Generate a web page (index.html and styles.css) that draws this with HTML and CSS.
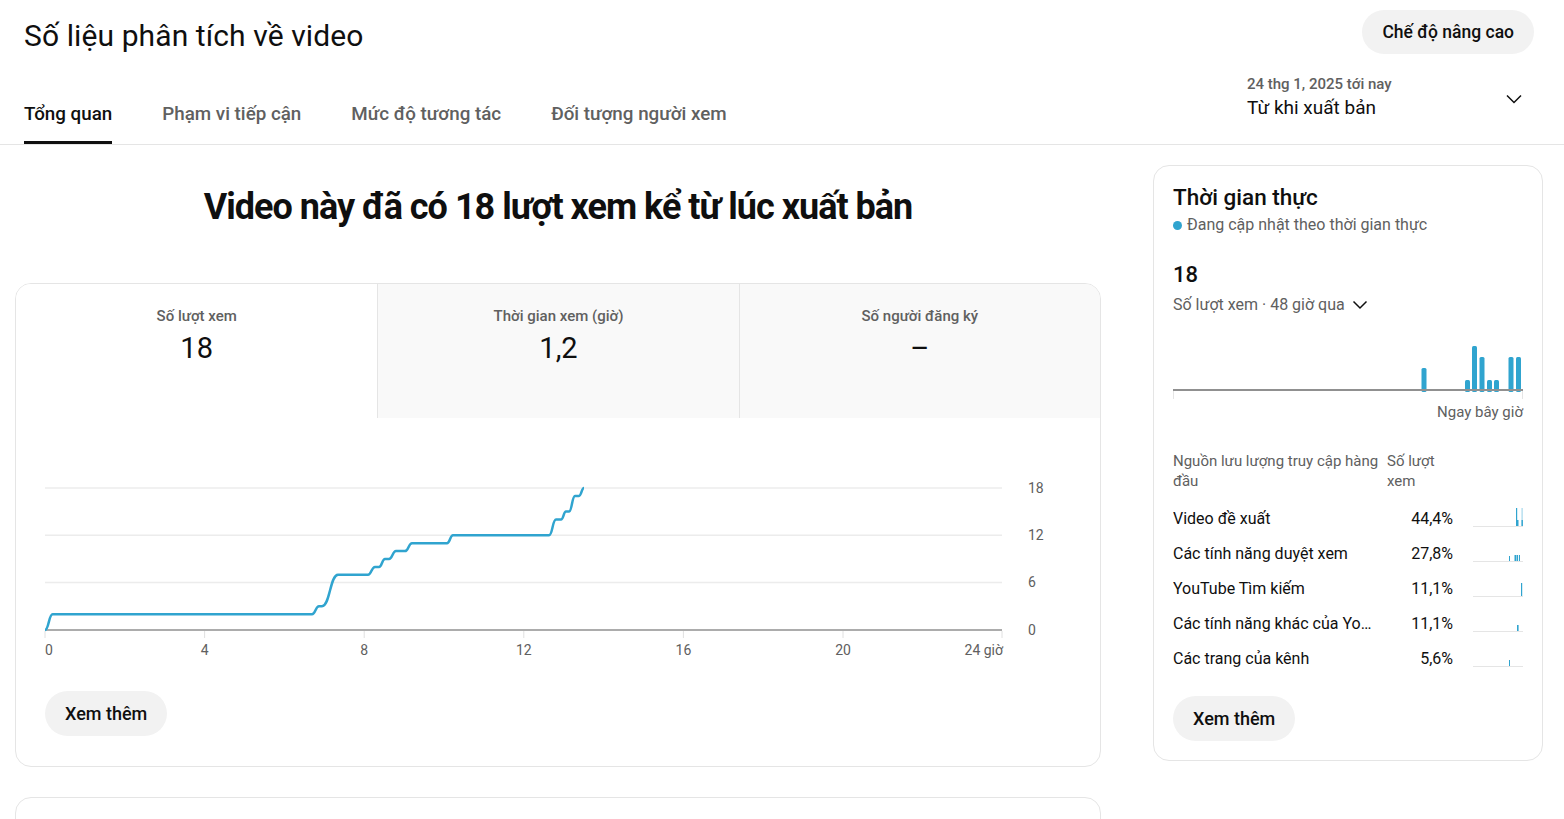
FILE: index.html
```html
<!DOCTYPE html>
<html lang="vi">
  <head>
    <meta charset="UTF-8" />
    <meta name="viewport" content="width=device-width, initial-scale=1.0" />
    <title>Số liệu phân tích về video</title>
    <link rel="stylesheet" href="styles.css">
  </head>
  <body>
    <header class="page-header">
      <div class="header-top">
        <h1 class="page-title">Số liệu phân tích về video</h1>
        <button class="pill-btn advanced-btn">Chế độ nâng cao</button>
      </div>
      <div class="header-bottom">
        <nav class="tabs">
          <a class="tab active">Tổng quan</a>
          <a class="tab">Phạm vi tiếp cận</a>
          <a class="tab">Mức độ tương tác</a>
          <a class="tab">Đối tượng người xem</a>
        </nav>
        <div class="date-picker">
          <div class="date-text">
            <div class="date-range">24 thg 1, 2025 tới nay</div>
            <div class="date-label">Từ khi xuất bản</div>
          </div>
          <svg class="chevron" width="16" height="10" viewBox="0 0 16 10">
            <path d="M1 1.5 L8 8.5 L15 1.5" fill="none" stroke="#0f0f0f" stroke-width="1.5" />
          </svg>
        </div>
      </div>
    </header>

    <main class="layout">
      <section class="left-col">
        <h2 class="headline">Video này đã có 18 lượt xem kể từ lúc xuất bản</h2>

        <div class="card overview-card">
          <div class="metrics">
            <div class="metric selected">
              <div class="metric-label">Số lượt xem</div>
              <div class="metric-value">18</div>
            </div>
            <div class="metric">
              <div class="metric-label">Thời gian xem (giờ)</div>
              <div class="metric-value">1,2</div>
            </div>
            <div class="metric">
              <div class="metric-label">Số người đăng ký</div>
              <div class="metric-value">–</div>
            </div>
          </div>

          <svg class="line-chart" width="1084" height="252" viewBox="16 418 1084 252">
            <g stroke="#ececec" stroke-width="1.5">
              <line x1="45" y1="488" x2="1002" y2="488" />
              <line x1="45" y1="535.3" x2="1002" y2="535.3" />
              <line x1="45" y1="582.6" x2="1002" y2="582.6" />
            </g>
            <g stroke="#e0e0e0" stroke-width="1">
              <line x1="45" y1="631" x2="45" y2="638" />
              <line x1="204.6" y1="631" x2="204.6" y2="638" />
              <line x1="364.2" y1="631" x2="364.2" y2="638" />
              <line x1="523.8" y1="631" x2="523.8" y2="638" />
              <line x1="683.4" y1="631" x2="683.4" y2="638" />
              <line x1="843" y1="631" x2="843" y2="638" />
              <line x1="1002" y1="631" x2="1002" y2="638" />
            </g>
            <line x1="45" y1="630" x2="1002" y2="630" stroke="#909090" stroke-width="1.5" />
            <path class="views-line" d="M45 630 C48.8 630, 48.8 614.2, 52.6 614.2 L312 614.2 C315.5 614.2, 315.5 606.3, 319 606.3 L322 606.3 C330 606.3, 330 574.8, 338 574.8 L368 574.8 C371.5 574.8, 371.5 566.9, 375 566.9 L379 566.9 C382 566.9, 382 559, 385 559 L389 559 C392.5 559, 392.5 551.1, 396 551.1 L405 551.1 C408.5 551.1, 408.5 543.2, 412 543.2 L447 543.2 C450 543.2, 450 535.3, 453 535.3 L549 535.3 C552.5 535.3, 552.5 519.5, 556 519.5 L561 519.5 C563.5 519.5, 563.5 511.6, 566 511.6 L569 511.6 C572 511.6, 572 495.9, 575 495.9 L579 495.9 C581.5 495.9, 581.5 488, 584 488" />
            <g class="axis-text">
              <text x="45" y="655">0</text>
              <text x="204.6" y="655" text-anchor="middle">4</text>
              <text x="364.2" y="655" text-anchor="middle">8</text>
              <text x="523.8" y="655" text-anchor="middle">12</text>
              <text x="683.4" y="655" text-anchor="middle">16</text>
              <text x="843" y="655" text-anchor="middle">20</text>
              <text x="1003" y="655" text-anchor="end">24 giờ</text>
              <text x="1028" y="493">18</text>
              <text x="1028" y="540">12</text>
              <text x="1028" y="587">6</text>
              <text x="1028" y="635">0</text>
            </g>
          </svg>

          <button class="pill-btn more-btn">Xem thêm</button>
        </div>

        <div class="card next-card"></div>
      </section>

      <aside class="card realtime">
        <h3 class="realtime-title">Thời gian thực</h3>
        <div class="live-note"><span class="live-dot"></span>Đang cập nhật theo thời gian thực</div>
        <div class="realtime-count">18</div>
        <div class="realtime-metric">
          Số lượt xem · 48 giờ qua
          <svg width="16" height="10" viewBox="0 0 16 10">
            <path d="M1.5 1.5 L8 8 L14.5 1.5" fill="none" stroke="#0f0f0f" stroke-width="1.5" />
          </svg>
        </div>
        <svg class="bar-chart" width="350" height="80" viewBox="1173 320 350 80">
          <g fill="#30a4cf">
            <rect x="1421.5" y="368" width="5" height="24" rx="1.5" />
            <rect x="1465" y="380" width="5" height="12" rx="1.5" />
            <rect x="1472" y="346" width="5" height="46" rx="1.5" />
            <rect x="1479.5" y="357" width="5" height="35" rx="1.5" />
            <rect x="1487" y="380" width="5" height="12" rx="1.5" />
            <rect x="1494" y="380" width="5" height="12" rx="1.5" />
            <rect x="1508.5" y="357" width="5" height="35" rx="1.5" />
            <rect x="1516" y="357" width="5" height="35" rx="1.5" />
          </g>
          <line x1="1173" y1="390" x2="1523" y2="390" stroke="#909090" stroke-width="2" />
          <g stroke="#e5e5e5" stroke-width="1">
            <line x1="1173.5" y1="391" x2="1173.5" y2="399" />
            <line x1="1522.5" y1="391" x2="1522.5" y2="399" />
          </g>
        </svg>
        <div class="now-label">Ngay bây giờ</div>

        <div class="sources">
          <div class="sources-head">Nguồn lưu lượng truy cập hàng đầu</div>
          <div class="sources-head">Số lượt xem</div>
          <div></div>

          <div class="source-name">Video đề xuất</div>
          <div class="source-pct">44,4%</div>
          <svg class="spark" width="50" height="22" viewBox="0 0 50 22">
            <line x1="0" y1="18.5" x2="50" y2="18.5" stroke="#e5e5e5" />
            <rect x="43" y="0" width="1.2" height="18" fill="#30a4cf" />
            <rect x="43.5" y="12" width="2" height="6" fill="#30a4cf" />
            <rect x="48.5" y="0" width="1.2" height="18" fill="#a6d8ec" />
            <rect x="48.5" y="12" width="1.4" height="6" fill="#30a4cf" />
          </svg>

          <div class="source-name">Các tính năng duyệt xem</div>
          <div class="source-pct">27,8%</div>
          <svg class="spark" width="50" height="22" viewBox="0 0 50 22">
            <line x1="0" y1="18.5" x2="50" y2="18.5" stroke="#e5e5e5" />
            <rect x="36" y="13" width="1" height="5" fill="#30a4cf" />
            <rect x="41.5" y="12" width="1.6" height="6" fill="#30a4cf" />
            <rect x="43.5" y="12" width="1.6" height="6" fill="#30a4cf" />
            <rect x="46" y="12" width="1" height="6" fill="#30a4cf" />
          </svg>

          <div class="source-name">YouTube Tìm kiếm</div>
          <div class="source-pct">11,1%</div>
          <svg class="spark" width="50" height="22" viewBox="0 0 50 22">
            <line x1="0" y1="18.5" x2="50" y2="18.5" stroke="#e5e5e5" />
            <rect x="48" y="5" width="1.2" height="13" fill="#30a4cf" />
          </svg>

          <div class="source-name">Các tính năng khác của YouTube</div>
          <div class="source-pct">11,1%</div>
          <svg class="spark" width="50" height="22" viewBox="0 0 50 22">
            <line x1="0" y1="18.5" x2="50" y2="18.5" stroke="#e5e5e5" />
            <rect x="44" y="12" width="1.6" height="6" fill="#30a4cf" />
          </svg>

          <div class="source-name">Các trang của kênh</div>
          <div class="source-pct">5,6%</div>
          <svg class="spark" width="50" height="22" viewBox="0 0 50 22">
            <line x1="0" y1="18.5" x2="50" y2="18.5" stroke="#e5e5e5" />
            <rect x="36" y="12" width="1" height="6" fill="#30a4cf" />
          </svg>
        </div>

        <button class="pill-btn more-btn realtime-more">Xem thêm</button>
      </aside>
    </main>
  </body>
</html>
```

FILE: styles.css
```css
:root {
  --text: #0f0f0f;
  --muted: #606060;
  --border: #e5e5e5;
  --pill: #f2f2f2;
  --blue: #30a4cf;
}

body {
  margin: 0;
  background: #fff;
  color: var(--text);
  font-family: Roboto, "Liberation Sans", sans-serif;
  overflow: hidden;
}

/* header */
.page-header {
  border-bottom: 1px solid var(--border);
  padding: 0 30px 0 24px;
}

.header-top {
  display: flex;
  justify-content: space-between;
  align-items: flex-start;
  padding-top: 10px;
}

.page-title {
  margin: 6px 0 0;
  font-size: 30px;
  font-weight: 400;
  line-height: 40px;
  letter-spacing: 0.1px;
}

.pill-btn {
  border: none;
  background: var(--pill);
  color: var(--text);
  font-family: Roboto, "Liberation Sans", sans-serif;
  font-weight: 500;
  border-radius: 23px;
  cursor: pointer;
}

.advanced-btn {
  height: 44px;
  padding: 0 20px;
  font-size: 17.5px;
}

.header-bottom {
  display: flex;
  justify-content: space-between;
  height: 88px;
}

.tabs {
  display: flex;
  align-items: flex-end;
  gap: 50px;
}

.tab {
  font-size: 18.8px;
  font-weight: 500;
  line-height: 24px;
  color: var(--muted);
  padding-bottom: 15px;
  border-bottom: 3px solid transparent;
}

.tab.active {
  color: var(--text);
  border-bottom-color: var(--text);
}

.date-picker {
  width: 275px;
  padding-right: 12px;
  margin-top: 18px;
  display: flex;
  justify-content: space-between;
  align-items: center;
  align-self: flex-start;
}

.date-range {
  font-size: 15px;
  font-weight: 500;
  line-height: 20px;
  color: var(--muted);
}

.date-label {
  font-size: 19px;
  line-height: 24px;
  margin-top: 2px;
}

.chevron {
  margin-top: 4px;
}

/* main layout */
.layout {
  display: grid;
  grid-template-columns: 1086px 390px;
  column-gap: 52px;
  padding: 21px 21px 0 15px;
  align-items: start;
}

.headline {
  margin: 17px 0 52px;
  text-align: center;
  font-size: 36px;
  line-height: 48px;
  font-weight: 700;
  letter-spacing: -1px;
}

.card {
  border: 1px solid var(--border);
  border-radius: 16px;
  background: #fff;
}

.overview-card {
  overflow: hidden;
  padding-bottom: 30px;
}

.metrics {
  display: grid;
  grid-template-columns: repeat(3, 1fr);
  height: 134px;
}

.metric {
  background: #f9f9f9;
  border-left: 1px solid var(--border);
  text-align: center;
  padding-top: 22px;
}

.metric.selected {
  background: #fff;
  border-left: none;
}

.metric-label {
  font-size: 15px;
  font-weight: 500;
  line-height: 20px;
  color: var(--muted);
}

.metric-value {
  margin-top: 4px;
  font-size: 29px;
  line-height: 36px;
}

.line-chart {
  display: block;
}

.views-line {
  fill: none;
  stroke: var(--blue);
  stroke-width: 2.5;
  stroke-linejoin: round;
}

.axis-text {
  font-family: Roboto, sans-serif;
  font-size: 14px;
  fill: var(--muted);
}

.more-btn {
  display: block;
  margin: 21px 0 0 29px;
  height: 45px;
  padding: 0 20px;
  font-size: 18px;
}

.next-card {
  margin-top: 30px;
  height: 120px;
}

/* realtime panel */
.realtime {
  margin-top: -1px;
  padding: 17px 19px 19px;
}

.realtime-title {
  margin: 0;
  font-size: 22.5px;
  font-weight: 500;
  line-height: 28px;
}

.live-note {
  margin-top: 4px;
  font-size: 16px;
  line-height: 20px;
  color: var(--muted);
  display: flex;
  align-items: center;
}

.live-dot {
  width: 9px;
  height: 9px;
  border-radius: 50%;
  background: var(--blue);
  margin-right: 5px;
}

.realtime-count {
  margin-top: 26px;
  font-size: 22px;
  font-weight: 500;
  line-height: 28px;
}

.realtime-metric {
  margin-top: 6px;
  font-size: 16px;
  line-height: 20px;
  color: var(--muted);
  display: flex;
  align-items: center;
  gap: 7px;
}

.bar-chart {
  display: block;
  margin-top: 5px;
}

.now-label {
  margin-top: 2px;
  text-align: right;
  font-size: 15px;
  line-height: 20px;
  color: var(--muted);
}

.sources {
  margin-top: 29px;
  display: grid;
  grid-template-columns: 214px 66px 70px;
  align-items: center;
}

.sources-head {
  align-self: start;
  font-size: 15px;
  line-height: 20px;
  color: var(--muted);
  padding-right: 4px;
  margin-bottom: 10px;
}

.source-name {
  font-size: 16px;
  line-height: 35px;
  padding-right: 8px;
  white-space: nowrap;
  overflow: hidden;
  text-overflow: ellipsis;
}

.source-pct {
  font-size: 16px;
  line-height: 35px;
  text-align: right;
}

.spark {
  justify-self: end;
  display: block;
}

.realtime-more {
  margin: 20px 0 0 0;
}
```
